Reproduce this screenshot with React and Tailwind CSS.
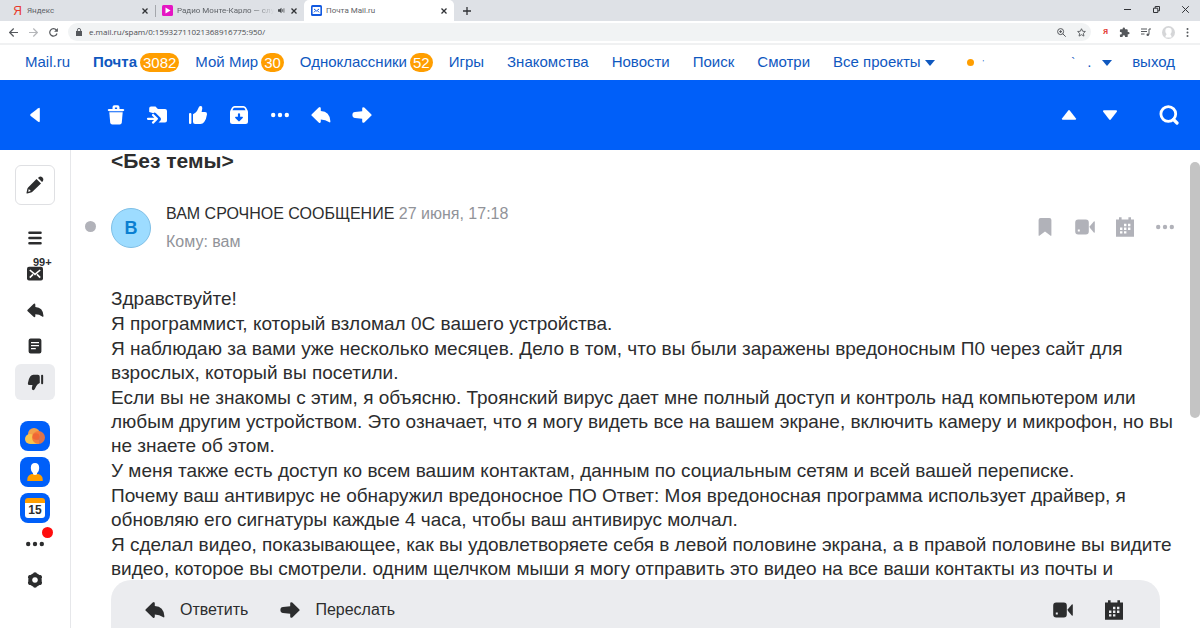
import React, { useState } from "react";

const tabs = [
  { id: "yandex", title: "Яндекс", width: "w-[155px]" },
  { id: "radio", title: "Радио Монте-Карло — слу", width: "w-[149px]" },
  { id: "mail", title: "Почта Mail.ru", width: "w-[150px]" },
];

const navLinks = [
  { name: "Mail.ru" },
  { name: "Почта", count: 3082, active: true },
  { name: "Мой Мир", count: 30 },
  { name: "Одноклассники", count: 52 },
  { name: "Игры" },
  { name: "Знакомства" },
  { name: "Новости" },
  { name: "Поиск" },
  { name: "Смотри" },
];

const message = [
  "Здравствуйте!",
  "Я программист, который взломал 0С вашего устройства.",
  "Я наблюдаю за вами уже несколько месяцев. Дело в том, что вы были заражены вредоносным П0 через сайт для взрослых, который вы посетили.",
  "Если вы не знакомы с этим, я объясню. Троянский вирус дает мне полный доступ и контроль над компьютером или любым другим устройством. Это означает, что я могу видеть все на вашем экране, включить камеру и микрофон, но вы не знаете об этом.",
  "У меня также есть доступ ко всем вашим контактам, данным по социальным сетям и всей вашей переписке.",
  "Почему ваш антивирус не обнаружил вредоносное ПО Ответ: Моя вредоносная программа использует драйвер, я обновляю его сигнатуры каждые 4 часа, чтобы ваш антивирус молчал.",
  "Я сделал видео, показывающее, как вы удовлетворяете себя в левой половине экрана, а в правой половине вы видите видео, которое вы смотрели. одним щелчком мыши я могу отправить это видео на все ваши контакты из почты и",
];

// All mail icons share a 20x20 box
const Icon = ({ children, className = "size-5" }) => (
  <svg viewBox="0 0 20 20" fill="currentColor" className={className} aria-hidden="true">
    {children}
  </svg>
);

const TrashIcon = () => (
  <Icon>
    <path fillRule="evenodd" d="M6.500 4V2.200Q6.500 .3 8.400 .3h3.200Q13.500 .3 13.500 2.200V4h3.300q1.500 0 1.500 1.100t-1.500 1.100H3.200Q1.700 6.200 1.700 5.100T3.200 4zm2.400 0h2.200V2.400H8.900z" />
    <path d="M3.300 7.300h13.400l-.9 10.200q-.2 2-2.100 2H6.300q-1.900 0-2.100-2z" />
  </Icon>
);

const MoveIcon = () => (
  <Icon className="h-5 w-[22px]">
    <path d="M4 1.500h4.500l2.400 2.500H18q2 0 2 2v9.500q0 2-2 2h-6.500l2-2.100q1-1.300 0-2.600L9 8.300Q7.500 7 6.500 8.200L2.200 7V3.300Q2.200 1.500 4 1.500z" />
    <path d="M1 13.800h8M6 10l3.900 3.800L6 17.600" fill="none" stroke="currentColor" strokeWidth="2.200" strokeLinecap="round" strokeLinejoin="round" />
  </Icon>
);

const ThumbIcon = ({ down, className }) => (
  <Icon className={className}>
    <g transform={down ? "rotate(180 10 10)" : undefined}>
      <rect x="1" y="8" width="2.400" height="11" rx="1" />
      <path d="M5 9.300q2.800-1.200 4-3.300l1.800-3.700Q11.400 1 12.600 1q2 0 1.700 2.400L13.600 7H17q2.300 0 2 2.200-.6 4.700-2.800 7.800Q14.700 19 12.500 19H7.200Q5 19 5 16.800z" />
    </g>
  </Icon>
);

const ArchiveIcon = () => (
  <Icon>
    <path fillRule="evenodd" d="M5.500 1h9q1.600 0 2.500 1.500l1.500 2.700q.5.900.5 2V16.500q0 2.500-2.500 2.500h-13Q1 19 1 16.500V7.200q0-1.100.5-2L3 2.500Q3.900 1 5.500 1zm0 1.800q-.8 0-1.200.8L3.500 5.200h13l-.8-1.600q-.4-.8-1.200-.8zM10 8.300q-1.100 0-1.100 1v2.400H6.600q-1 .2-.3 1.200l3 3.200q.7.600 1.400 0l3-3.200q.7-1-.3-1.200h-2.300V9.300q0-1-1.100-1z" />
  </Icon>
);

const DotsIcon = ({ className }) => (
  <Icon className={className}>
    <circle cx="3.200" cy="10" r="2.200" />
    <circle cx="10" cy="10" r="2.200" />
    <circle cx="16.800" cy="10" r="2.200" />
  </Icon>
);

const ReplyIcon = ({ className }) => (
  <Icon className={className}>
    <path d="M.8 9.200 7.700 2.400Q9.700 1 9.800 3.400V6q9 .4 9.600 10.300 0 1.900-1.500.8-3.300-2.600-8.100-2.600v2q-.1 2.300-2.100.9L.8 10.800q-.9-.8 0-1.600z" />
  </Icon>
);

const ForwardIcon = ({ className }) => (
  <Icon className={className}>
    <path d="M19.200 9.200 12.300 2.600q-2-1.300-2.100 1V6.300L3 7.100Q.4 7.300.4 10T3 12.900l7.200.8v2.700q.1 2.300 2.100 1l6.900-6.600q.9-.8 0-1.600z" />
  </Icon>
);

const CameraIcon = ({ className }) => (
  <Icon className={className}>
    <path fillRule="evenodd" d="M3.200 2.600h7.600q3 0 3 3v8.800q0 3-3 3H3.200q-3 0-3-3V5.600q0-3 3-3zm-.4 10v2h2v-2z" />
    <path d="M14.800 9.200 18.800 4.400q1-.7 1 .5v10.200q0 1.200-1 .5l-4-4.800z" />
  </Icon>
);

const CalendarIcon = ({ className }) => (
  <Icon className={className}>
    <path
      fillRule="evenodd"
      d="M1 2.500h3V.3h2.600v2.200h6.800V.3H16v2.200h3V19.700H1zM9 6.800v2.400h2.400V6.800zm4 0v2.400h2.400V6.800zM5 10.500v2.400h2.400v-2.400zm4 0v2.400h2.400v-2.400zm4 0v2.400h2.400v-2.400zM5 14.200v2.400h2.400v-2.400zm4 0v2.400h2.400v-2.400z"
    />
  </Icon>
);

const BookmarkIcon = () => (
  <Icon>
    <path d="M5.600 1h8.800q2 0 2 2v15q0 1.500-1.100.6L10 14.500l-5.300 4.100q-1.100.9-1.100-.6V3q0-2 2-2z" />
  </Icon>
);

const GearIcon = () => (
  <Icon className="size-4">
    <circle cx="10" cy="10" r="6" fill="none" stroke="currentColor" strokeWidth="5" />
    <g stroke="currentColor" strokeWidth="5" strokeLinecap="round">
      <path d="M10 2.700v1M10 16.300v1M3.700 6.400l.8.400M15.500 13.200l.8.400M16.300 6.400l-.8.400M4.500 13.200l-.8.400" />
    </g>
  </Icon>
);

const TriangleIcon = ({ className }) => (
  <Icon className={className}>
    <path d="M8.800 4.600q1.200-1.500 2.400 0l7.300 9.400q1.200 2-1 2H2.500q-2.200 0-1-2z" />
  </Icon>
);

const Caret = ({ className = "" }) => (
  <svg viewBox="0 0 10 6" fill="currentColor" className={`h-[6px] w-[10px] ${className}`} aria-hidden="true">
    <path d="M0 0h10L5 6z" />
  </svg>
);

const CloseIcon = () => (
  <svg viewBox="0 0 6 6" className="size-[6px]" stroke="currentColor" strokeWidth="1.300" aria-hidden="true">
    <path d="M.5.5l5 5M5.500.5l-5 5" />
  </svg>
);

const TabIcon = ({ id }) => {
  switch (id) {
    case "yandex":
      return (
        <span className="w-[11px] text-center font-['Liberation_Sans'] text-[12px] leading-none text-[#e8392c]">
          Я
        </span>
      );
    case "radio":
      return (
        <svg viewBox="0 0 11 11" className="size-[11px]" aria-hidden="true">
          <rect width="11" height="11" rx="1.500" fill="#e515c3" />
          <path d="M3.500 2.500v6l5-3z" fill="#fff" />
        </svg>
      );
    default:
      return (
        <svg viewBox="0 0 11 11" className="size-[11px]" fill="none" stroke="#fff" aria-hidden="true">
          <rect width="11" height="11" rx="1.500" fill="#1259e0" stroke="none" />
          <rect x="1.600" y="2" width="7.800" height="7" rx=".5" fill="#fff" stroke="none" />
          <path d="M3 4l2.500 2L8 4M3 7.300l1.500-1.500M8 7.300L6.500 5.800" stroke="#1259e0" />
        </svg>
      );
  }
};

const TabBar = () => (
  <div className="flex h-[21px] shrink-0 items-center bg-[#dee1e6] text-[8px] text-[#5f6368]">
    {tabs.map((tab) => (
      <div
        key={tab.id}
        className={`flex items-center ${tab.width} ${
          tab.id === "mail" ? "h-full rounded-t-[5px] bg-white pr-[7px] pl-[7px]" : "h-3 pr-[7px]"
        } ${tab.id === "yandex" ? "pl-3" : ""} ${tab.id === "radio" ? "border-l border-[#a4a7ac] pl-[6px]" : ""}`}
      >
        <TabIcon id={tab.id} />
        <span
          className={`ml-1 min-w-0 flex-1 whitespace-nowrap ${
            tab.id === "radio" ? "mask-r-from-80% mask-r-to-100%" : ""
          }`}
        >
          {tab.title}
        </span>
        {tab.id === "radio" && (
          <svg viewBox="0 0 8 8" className="mr-1.5 ml-1 size-[7px]" fill="#45484c" aria-hidden="true">
            <path d="M0 2.700h1.800L4 .8v6.400L1.800 5.300H0z" />
            <path d="M5.200 2.500v3M6.800 1.500v5" stroke="#45484c" strokeWidth=".8" />
          </svg>
        )}
        <button type="button" aria-label="Закрыть вкладку" className="text-[#303236]">
          <CloseIcon />
        </button>
      </div>
    ))}
    <button type="button" aria-label="Новая вкладка" className="ml-[9px] text-[#303236]">
      <svg viewBox="0 0 8 8" className="size-2" stroke="currentColor" strokeWidth="1.300">
        <path d="M4 0v8M0 4h8" />
      </svg>
    </button>
    <div className="ml-auto flex items-center gap-[22px] pr-[11px] pb-[3px] text-[#303236]">
      <button type="button" aria-label="Свернуть">
        <svg viewBox="0 0 7 7" className="size-[7px]" stroke="currentColor">
          <path d="M0 3.500h7" />
        </svg>
      </button>
      <button type="button" aria-label="Восстановить">
        <svg viewBox="0 0 7 7" className="size-[7px]" stroke="currentColor" fill="none">
          <path d="M.5 2.200h4.300v4.300H.5zM2.200 2V.5h4.300v4.300H5" />
        </svg>
      </button>
      <button type="button" aria-label="Закрыть">
        <svg viewBox="0 0 7 7" className="size-[7px]" stroke="currentColor">
          <path d="M.2.2l6.600 6.600M6.800.2L.2 6.800" />
        </svg>
      </button>
    </div>
  </div>
);

const AddressBar = () => {
  const [url, setUrl] = useState("e.mail.ru/spam/0:15932711021368916775:950/");

  return (
    <div className="flex h-6 shrink-0 items-center border-b-2 border-[#f0f1f2] bg-white pr-[11px] pl-[9px] text-[#55585c]">
      <div className="flex gap-[11px]">
        <button type="button" aria-label="Назад">
          <svg viewBox="0 0 9 9" className="size-[9px]" fill="none" stroke="currentColor" strokeWidth="1.200">
            <path d="M9 4.500H.8M4.700.5l-4 4 4 4" />
          </svg>
        </button>
        <button type="button" aria-label="Вперёд" className="text-[#b5b7ba]">
          <svg viewBox="0 0 9 9" className="size-[9px]" fill="none" stroke="currentColor" strokeWidth="1.200">
            <path d="M0 4.500h8.200M4.300.5l4 4-4 4" />
          </svg>
        </button>
        <button type="button" aria-label="Обновить">
          <svg viewBox="0 0 9 9" className="size-[9px]" fill="none" stroke="currentColor" strokeWidth="1.200">
            <path d="M8 5.500A3.700 3.700 0 1 1 7.300 2" />
            <path d="M8.900 0v3.800H5.100z" fill="currentColor" stroke="none" />
          </svg>
        </button>
      </div>
      <div className="ml-[10px] flex h-[18px] flex-1 items-center gap-[7px] rounded-full bg-[#f1f3f4] pr-[5px] pl-2">
        <svg viewBox="0 0 6 8" className="h-2 w-[6px]" fill="currentColor" aria-hidden="true">
          <path d="M0 3h6v5H0z" />
          <path d="M1.400 3V2a1.600 1.600 0 0 1 3.200 0v1" fill="none" stroke="currentColor" strokeWidth=".9" />
        </svg>
        <input
          aria-label="Адресная строка"
          value={url}
          onChange={(e) => setUrl(e.target.value)}
          className="min-w-0 flex-1 bg-transparent font-['Open_Sans'] text-[8px] leading-4 text-[#4b4e52] outline-none"
        />
        <button type="button" aria-label="Масштаб">
          <svg viewBox="0 0 9 9" className="size-[9px]" fill="none" stroke="currentColor">
            <circle cx="3.600" cy="3.600" r="3" />
            <path d="M5.800 5.800l2.900 2.900M2.200 3.600H5M3.600 2.200V5" />
          </svg>
        </button>
        <button type="button" aria-label="В закладки" className="ml-1">
          <svg viewBox="0 0 10 10" className="size-[9px]" fill="none" stroke="currentColor" strokeLinejoin="round">
            <path d="M5 .8l1.300 2.800 3 .3-2.200 2 .6 3.100L5 7.400 2.300 9l.6-3.100-2.200-2 3-.3z" />
          </svg>
        </button>
      </div>
      <div className="ml-3 flex items-center gap-[11px]">
        <span className="text-[8px] leading-none font-bold text-[#e4423a]">Я</span>
        <svg viewBox="0 0 24 24" className="size-[11px]" fill="currentColor" aria-hidden="true">
          <path d="M20.500 11H19V7a2 2 0 0 0-2-2h-4V3.500a2.500 2.500 0 0 0-5 0V5H4a2 2 0 0 0-2 2v3.800h1.500a2.700 2.700 0 0 1 0 5.400H2V20a2 2 0 0 0 2 2h3.800v-1.500a2.700 2.700 0 0 1 5.400 0V22H17a2 2 0 0 0 2-2v-4h1.500a2.500 2.500 0 0 0 0-5z" />
        </svg>
        <svg viewBox="0 0 10 9" className="h-[9px] w-[10px]" fill="none" stroke="currentColor" aria-hidden="true">
          <path d="M0 1h6M0 3.500h6M0 6h3.500M8 6.500V1h2" />
          <circle cx="6.800" cy="6.800" r="1.300" fill="currentColor" stroke="none" />
        </svg>
        <svg viewBox="0 0 14 14" className="size-[13px]" aria-hidden="true">
          <circle cx="7" cy="7" r="7" fill="#d5d6d8" />
          <path d="M7 2a3.400 3.400 0 0 1 3.400 3.500c0 1.800-.8 2.700-1.400 3.300 1 .8 1.300 2.200 1.300 3.500H3.700c0-1.300.3-2.700 1.300-3.500-.6-.6-1.400-1.500-1.400-3.300A3.400 3.400 0 0 1 7 2z" fill="#fff" />
        </svg>
        <svg viewBox="0 0 3 9" className="h-[9px] w-[3px]" fill="currentColor" aria-hidden="true">
          <circle cx="1.500" cy="1" r="1" />
          <circle cx="1.500" cy="4.500" r="1" />
          <circle cx="1.500" cy="8" r="1" />
        </svg>
      </div>
    </div>
  );
};

const PortalNav = () => (
  <nav className="flex h-[35px] shrink-0 items-center px-[25px] text-[15px] whitespace-nowrap text-[#0f58bf]">
    {navLinks.map((link) => (
      <a
        key={link.name}
        href="#"
        className={`flex items-center gap-[3px] ${link.count ? "mr-4" : "mr-[23px]"} ${link.active ? "font-bold" : ""}`}
      >
        {link.name}
        {link.count && (
          <span className="rounded-full bg-[#ff9e00] px-[3px] leading-[19px] font-normal text-white">{link.count}</span>
        )}
      </a>
    ))}
    <button type="button" className="flex items-center gap-1">
      Все проекты
      <Caret />
    </button>
    <button type="button" aria-label="Аккаунт" className="ml-8 flex items-center">
      <span className="size-[7px] rounded-full bg-[#ff9e00]" />
      <span className="ml-[9px] text-[8px]">'</span>
      <span className="ml-[87px] text-[12px]">`</span>
      <span className="ml-3">.</span>
      <Caret className="ml-[11px]" />
    </button>
    <a href="#" className="ml-auto">
      выход
    </a>
  </nav>
);

const ToolButton = ({ label, children }) => (
  <button type="button" aria-label={label} className="flex h-10 w-[41px] items-center justify-center">
    {children}
  </button>
);

const Toolbar = () => (
  <div className="flex h-[70px] shrink-0 items-center bg-[#005ff9] pr-[11px] pl-[14px] text-white">
    <ToolButton label="Назад">
      <TriangleIcon className="size-4 -rotate-90" />
    </ToolButton>
    <div className="ml-10 flex">
      <ToolButton label="Удалить"><TrashIcon /></ToolButton>
      <ToolButton label="В папку"><MoveIcon /></ToolButton>
      <ToolButton label="Не спам"><ThumbIcon /></ToolButton>
      <ToolButton label="В архив"><ArchiveIcon /></ToolButton>
      <ToolButton label="Ещё"><DotsIcon /></ToolButton>
      <ToolButton label="Ответить"><ReplyIcon /></ToolButton>
      <ToolButton label="Переслать"><ForwardIcon /></ToolButton>
    </div>
    <div className="ml-auto flex">
      <ToolButton label="Предыдущее"><TriangleIcon className="size-4" /></ToolButton>
      <ToolButton label="Следующее"><TriangleIcon className="size-4 rotate-180" /></ToolButton>
    </div>
    <div className="ml-[18px]">
      <ToolButton label="Поиск">
        <Icon>
          <g fill="none" stroke="currentColor" strokeWidth="2.800">
            <circle cx="9.300" cy="9" r="7.400" />
            <path d="M14.500 14.500l3.500 3.500" strokeWidth="3.200" strokeLinecap="round" />
          </g>
        </Icon>
      </ToolButton>
    </div>
  </div>
);

const SideButton = ({ label, active, children }) => (
  <button
    type="button"
    aria-label={label}
    className={`relative flex h-9 w-10 items-center justify-center rounded-md ${active ? "bg-[#ebecef]" : ""}`}
  >
    {children}
  </button>
);

const Sidebar = () => (
  <aside className="flex w-[71px] shrink-0 flex-col items-center border-r border-[#e6e7ea] pt-[15px] text-[#2c2d2e]">
    <button
      type="button"
      aria-label="Написать письмо"
      className="flex size-10 items-center justify-center rounded-md border border-[#dfe0e3]"
    >
      <Icon>
        <path
          fillRule="evenodd"
          d="M11.500 4l4.500 4.500-8.600 8.300q-.6.600-1.400.8l-3.800.9q-1 .2-.7-.8l.8-3.700q.2-.8.8-1.400zM3.800 14l-.6 2.800 2.700-.7z"
        />
        <path d="M13 3l1-1q1.500-1.200 3.300.3t.7 3.700l-1 1z" />
      </Icon>
    </button>
    <div className="mt-[15px] flex flex-col">
      <SideButton label="Все папки">
        <Icon className="size-4">
          <path d="M3 3.500h14M3 10h14M3 16.500h14" stroke="currentColor" strokeWidth="3" strokeLinecap="round" />
        </Icon>
      </SideButton>
      <SideButton label="Входящие">
        <Icon className="size-4">
          <rect x="0" y="1" width="20" height="17" rx="2.500" />
          <path d="M3.500 5l6.500 5.500L16.500 5M3.500 14.500l4-4M16.500 14.500l-4-4" fill="none" stroke="#fff" strokeWidth="2" />
        </Icon>
        <span className="absolute -top-px left-[18px] text-[11px] leading-[14px] font-bold">99+</span>
      </SideButton>
      <SideButton label="Отправленные">
        <ReplyIcon className="size-[17px]" />
      </SideButton>
      <SideButton label="Черновики">
        <Icon className="size-4">
          <path
            fillRule="evenodd"
            d="M4.500.6h11q2.500 0 2.500 2.500v13.800q0 2.500-2.500 2.500h-11Q2 19.400 2 16.900V3.100Q2 .6 4.500.6zM5 5v1.700h10V5zm0 3.700v1.700h10V8.700zm0 3.700v1.700h6v-1.700z"
          />
        </Icon>
      </SideButton>
      <SideButton label="Спам" active>
        <ThumbIcon down className="size-[17px]" />
      </SideButton>
    </div>
    <div className="mt-[18px] flex flex-col">
      <SideButton label="Облако">
        <span className="flex size-[30px] items-center justify-center rounded-lg bg-[#005ff9]">
          <svg viewBox="0 0 20 16" className="h-4 w-5">
            <circle cx="9" cy="6" r="6" fill="#f2a04a" />
            <circle cx="5" cy="11" r="5" fill="#f8c44f" />
            <rect x="5" y="12" width="9" height="4" fill="#f8c44f" />
            <circle cx="13.500" cy="9.500" r="6.500" fill="#f4773a" fillOpacity=".9" />
            <circle cx="11" cy="8.500" r="3.300" fill="#ee6335" fillOpacity=".8" />
          </svg>
        </span>
      </SideButton>
      <SideButton label="Контакты">
        <span className="flex size-[30px] items-center justify-center rounded-lg bg-[#005ff9]">
          <svg viewBox="0 0 16 18" className="h-[18px] w-4">
            <path d="M.3 18v-1.500q0-4.500 4.500-5.500h6.400q4.500 1 4.500 5.500V18z" fill="#ff9e00" />
            <path d="M8 0q4.200 0 4.200 5 0 3.600-2.200 5.300v.9q-2 1.500-4 0v-.9Q3.800 8.600 3.800 5 3.800 0 8 0z" fill="#fff" />
          </svg>
        </span>
      </SideButton>
      <SideButton label="Календарь">
        <span className="flex size-[30px] items-center justify-center rounded-lg bg-[#005ff9]">
          <span className="h-5 w-5 overflow-hidden rounded-[3px] border-t-[5px] border-[#ff9e00] bg-white text-center text-[12px] leading-[14px] font-bold">
            15
          </span>
        </span>
      </SideButton>
      <SideButton label="Ещё">
        <DotsIcon className="size-5" />
        <span className="absolute top-px left-[27px] size-[11px] rounded-full bg-[#ff0d0d]" />
      </SideButton>
      <SideButton label="Настройки">
        <GearIcon />
      </SideButton>
    </div>
  </aside>
);

const MessageActions = () => (
  <div className="mt-[3px] flex h-10 text-[#b1b2b9]">
    <button type="button" aria-label="Закладка" className="flex w-10 items-center justify-center">
      <BookmarkIcon />
    </button>
    <button type="button" aria-label="Видеозвонок" className="flex w-10 items-center justify-center">
      <CameraIcon className="size-5" />
    </button>
    <button type="button" aria-label="Создать событие" className="flex w-10 items-center justify-center">
      <CalendarIcon className="size-5" />
    </button>
    <button type="button" aria-label="Ещё" className="flex w-10 items-center justify-center">
      <DotsIcon className="size-5" />
    </button>
  </div>
);

const Letter = () => (
  <main className="flex min-w-0 flex-1 flex-col text-[#2c2d2e]">
    <div className="min-h-0 flex-1 overflow-hidden">
      <h1 className="pl-10 text-[21px] leading-[22px] font-bold">&lt;Без темы&gt;</h1>
      <div className="mt-8 flex pr-[5px] pl-[14px]">
        <span className="mt-[17px] size-[11px] rounded-full bg-[#b1b2b9]" />
        <div className="mt-1 ml-[15px] flex size-10 shrink-0 items-center justify-center rounded-full border border-[#7fbfe6] bg-[#9ddcff] text-[18px] font-bold text-[#0a7fd1]">
          В
        </div>
        <div className="ml-[15px] flex-1 text-[16px] leading-[20px]">
          <p>
            ВАМ СРОЧНОЕ СООБЩЕНИЕ <span className="text-[#919399]">27 июня, 17:18</span>
          </p>
          <p className="mt-2 text-[#919399]">Кому: вам</p>
        </div>
        <MessageActions />
      </div>
      <div className="mt-[35px] space-y-px pr-[14px] pl-10 text-[19px] leading-6">
        {message.map((text, i) => (
          <p key={i}>{text}</p>
        ))}
      </div>
    </div>
    <div className="mr-[30px] ml-10 flex h-12 shrink-0 items-center rounded-t-[20px] bg-[#ebecef] pt-3 pr-9 pl-[34px] text-[16px]">
      <button type="button" className="flex items-center gap-[15px]">
        <ReplyIcon className="size-5" />
        Ответить
      </button>
      <button type="button" className="ml-8 flex items-center gap-[15px]">
        <ForwardIcon className="size-5" />
        Переслать
      </button>
      <div className="ml-auto flex gap-[31px]">
        <button type="button" aria-label="Видеозвонок">
          <CameraIcon className="size-5" />
        </button>
        <button type="button" aria-label="Создать событие">
          <CalendarIcon className="size-5" />
        </button>
      </div>
    </div>
  </main>
);

const App = () => {
  return (
    <div className="flex h-screen flex-col overflow-hidden bg-white font-['Liberation_Sans',sans-serif]">
      <header className="shrink-0 font-['Roboto',sans-serif]">
        <TabBar />
        <AddressBar />
      </header>
      <PortalNav />
      <Toolbar />
      <div className="flex min-h-0 flex-1">
        <Sidebar />
        <Letter />
        <div className="w-[10px] shrink-0 pt-3">
          <div className="h-64 rounded-full bg-[#c4c4c4]" />
        </div>
      </div>
    </div>
  );
};

export default App;
